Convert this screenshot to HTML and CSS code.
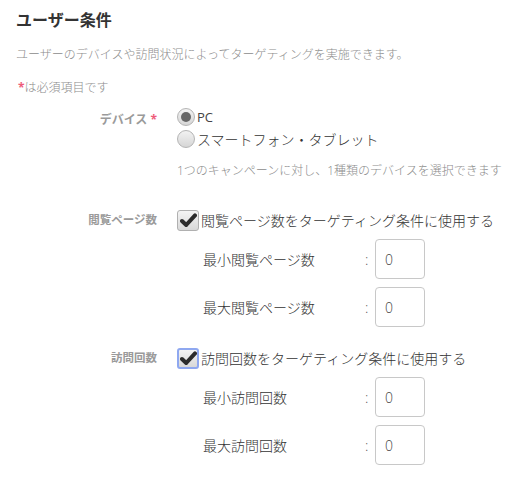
FILE: index.html
```html
<!DOCTYPE html>
<html lang="ja">
<head>
<meta charset="utf-8">
<link rel="stylesheet" href="styles.css">
</head>
<body>
<div class="page">
  <h1 class="title">ユーザー条件</h1>
  <p class="desc">ユーザーのデバイスや訪問状況によってターゲティングを実施できます。</p>
  <p class="req"><span class="star">*</span>は必須項目です</p>

  <div class="field device">
    <div class="label">デバイス <span class="star">*</span></div>
    <div class="control">
      <label class="radio-row"><span class="radio checked"></span><span class="pc">PC</span></label>
      <label class="radio-row"><span class="radio"></span><span class="sp">スマートフォン・タブレット</span></label>
      <p class="help">1つのキャンペーンに対し、1種類のデバイスを選択できます</p>
    </div>
  </div>

  <div class="field pages">
    <div class="label small">閲覧ページ数</div>
    <div class="control">
      <label class="check-row"><span class="check"><svg width="17" height="15" viewBox="0 0 17 15"><path d="M2 8 L6.2 12 L15 2.4" fill="none" stroke="#2b2b2b" stroke-width="4" stroke-linecap="round" stroke-linejoin="round"/></svg></span><span>閲覧ページ数をターゲティング条件に使用する</span></label>
      <div class="num-row first"><span class="num-label">最小閲覧ページ数</span><span class="colon">:</span><span class="input">0</span></div>
      <div class="num-row"><span class="num-label">最大閲覧ページ数</span><span class="colon">:</span><span class="input">0</span></div>
    </div>
  </div>

  <div class="field visits">
    <div class="label small">訪問回数</div>
    <div class="control">
      <label class="check-row"><span class="check focus"><svg width="17" height="15" viewBox="0 0 17 15"><path d="M2 8 L6.2 12 L15 2.4" fill="none" stroke="#2b2b2b" stroke-width="4" stroke-linecap="round" stroke-linejoin="round"/></svg></span><span>訪問回数をターゲティング条件に使用する</span></label>
      <div class="num-row first"><span class="num-label">最小訪問回数</span><span class="colon">:</span><span class="input">0</span></div>
      <div class="num-row"><span class="num-label">最大訪問回数</span><span class="colon">:</span><span class="input">0</span></div>
    </div>
  </div>
</div>
</body>
</html>
```

FILE: styles.css
```css
html, body {
  margin: 0;
  padding: 0;
  background: #fff;
}
body {
  font-family: "Open Sans", "Noto Sans CJK JP", sans-serif;
  color: #333;
}
.page {
  padding: 10px 16px;
}
.title {
  margin: 0;
  font-size: 16px;
  line-height: 20px;
  font-weight: bold;
  color: #333;
}
.desc {
  margin: 15px 0 0;
  font-size: 12px;
  line-height: 20px;
  font-weight: 300;
  color: #8c8c8c;
}
.req {
  margin: 13px 0 0 2px;
  font-size: 12px;
  line-height: 20px;
  font-weight: 300;
  color: #8c8c8c;
}
.star {
  color: #ee5c7a;
  font-weight: bold;
}
.field {
  display: grid;
  grid-template-columns: 141px 1fr;
  column-gap: 20px;
}
.label {
  text-align: right;
  font-size: 12px;
  font-weight: bold;
  color: #9a9a9a;
  line-height: 20px;
}
.device {
  margin-top: 8px;
}
.device .label {
  padding-top: 4px;
}
.pages {
  margin-top: 27px;
}
.visits {
  margin-top: 19px;
}
.label.small {
  font-size: 11.5px;
  padding-top: 2px;
  line-height: 20px;
}
.control {
  display: flex;
  flex-direction: column;
}
.radio-row {
  display: flex;
  align-items: center;
  height: 22px;
  gap: 2px;
}
.radio {
  box-sizing: border-box;
  width: 18px;
  height: 18px;
  border-radius: 50%;
  border: 1px solid #b4b4b4;
  background: linear-gradient(#f2f2f2, #d6d6d6);
  display: flex;
  align-items: center;
  justify-content: center;
}
.radio.checked::after {
  content: "";
  width: 10px;
  height: 10px;
  border-radius: 50%;
  background: #666;
}
.pc {
  font-size: 13px;
  color: #444;
}
.sp {
  font-size: 14px;
  font-weight: 300;
  color: #333;
}
.help {
  margin: 11px 0 0;
  font-size: 12px;
  line-height: 20px;
  font-weight: 300;
  color: #8c8c8c;
}
.check-row {
  display: flex;
  align-items: center;
  height: 24px;
  font-size: 14px;
  font-weight: 300;
  color: #333;
  gap: 2px;
}
.check {
  box-sizing: border-box;
  width: 22px;
  height: 21px;
  border: 1px solid #b0b0b0;
  border-radius: 3px;
  background: linear-gradient(#f4f4f4, #d8d8d8);
  display: flex;
  align-items: center;
  justify-content: center;
}
.check.focus {
  border: 2px solid #8fa8f0;
}
.num-row {
  display: flex;
  align-items: center;
  margin-top: 8px;
  padding-left: 26px;
  font-size: 14px;
  font-weight: 300;
  color: #333;
}
.num-row.first {
  margin-top: 7px;
}
.num-label {
  width: 162px;
}
.colon {
  width: 10px;
  color: #555;
}
.input {
  box-sizing: border-box;
  width: 50px;
  height: 40px;
  border: 1px solid #c8c8c8;
  border-radius: 4px;
  padding-left: 9px;
  display: flex;
  align-items: center;
  font-size: 14px;
  color: #444;
}
```
